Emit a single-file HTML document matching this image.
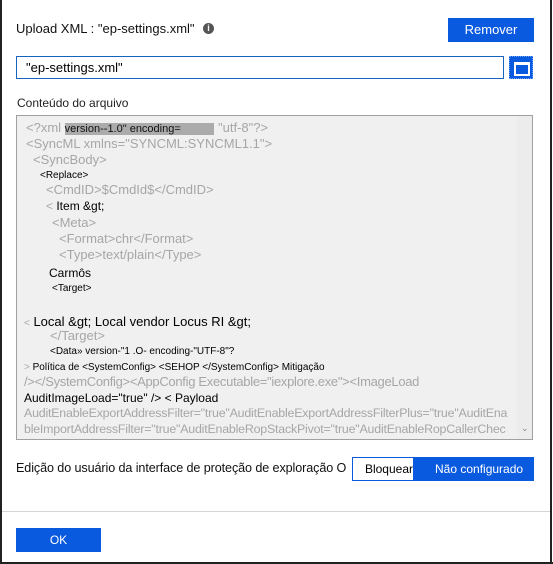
<!DOCTYPE html>
<html><head><style>
body{margin:0;width:553px;height:564px;background:#fff;font-family:"Liberation Sans",sans-serif;position:relative;overflow:hidden}
.a{position:absolute;white-space:nowrap}
.g{color:#a6a6a6;font-size:13px}
.k{color:#000;font-size:10px}
.box{position:absolute;left:16px;top:115px;width:517px;height:325px;background:#f0f0f0;border:1px solid #a0a0a0;box-sizing:border-box;overflow:hidden}
.box .a{margin-left:-17px;margin-top:-116px}
</style></head><body>
<div class="a" style="left:0;top:0;width:2px;height:564px;background:#222"></div>
<div class="a" style="left:550px;top:0;width:2px;height:564px;background:#222"></div>
<div class="a" style="left:0;top:562px;width:553px;height:2px;background:#222"></div>

<div class="a" style="left:16px;top:21px;font-size:13px;color:#111">Upload XML : "ep-settings.xml"</div>
<div class="a" style="left:203px;top:23px;width:11px;height:11px;border-radius:50%;background:#555;color:#fff;font-size:9px;font-weight:bold;text-align:center;line-height:11px">i</div>
<div class="a" style="left:448px;top:18px;width:86px;height:24px;background:#0a5ae0;color:#fff;font-size:13px;text-align:center;line-height:24px">Remover</div>

<div class="a" style="left:16px;top:56px;width:488px;height:23px;border:1px solid #1565c0;font-size:13px;line-height:21px;padding-left:9px;box-sizing:border-box">"ep-settings.xml"</div>
<div class="a" style="left:509px;top:56px;width:24px;height:23px;background:#0a5ae0;border:1px dotted #6aa0ff;box-sizing:border-box"><div style="position:absolute;left:4px;top:5px;width:12px;height:9px;border:2px solid #fff;border-top-width:3px"></div></div>

<div class="a" style="left:17px;top:96px;font-size:12px;color:#222">Conteúdo do arquivo</div>
<div class="box">
<div class="a" style="left:517px;top:116px;width:15px;height:323px;background:#ececec"></div>
<div class="a" style="left:521px;top:423px;font-size:9px;color:#888">⌄</div>
<div class="a g" style="left:26px;top:120px">&lt;?xml <span style="background:#ababab;color:#111;font-size:11px">version--1.0" encoding=&nbsp;&nbsp;&nbsp;&nbsp;&nbsp;&nbsp;&nbsp;&nbsp;&nbsp;&nbsp;&nbsp;</span> "utf-8"?&gt;</div>
<div class="a g" style="left:26px;top:136px">&lt;SyncML xmlns="SYNCML:SYNCML1.1"&gt;</div>
<div class="a g" style="left:33px;top:152px">&lt;SyncBody&gt;</div>
<div class="a k" style="left:40px;top:170px">&lt;Replace&gt;</div>
<div class="a g" style="left:46px;top:182px">&lt;CmdID&gt;$CmdId$&lt;/CmdID&gt;</div>
<div class="a" style="left:46px;top:199px;font-size:12px"><span style="color:#aaa">&lt;</span> Item &amp;gt;</div>
<div class="a g" style="left:52px;top:215px">&lt;Meta&gt;</div>
<div class="a g" style="left:59px;top:231px">&lt;Format&gt;chr&lt;/Format&gt;</div>
<div class="a g" style="left:59px;top:247px">&lt;Type&gt;text/plain&lt;/Type&gt;</div>
<div class="a" style="left:49px;top:266px;font-size:12px">Carmôs</div>
<div class="a k" style="left:52px;top:283px;font-size:10px">&lt;Target&gt;</div>
<div class="a" style="left:24px;top:314px;font-size:13px"><span style="color:#aaa;font-size:10px">&lt;</span> Local &amp;gt; Local vendor Locus RI &amp;gt;</div>
<div class="a g" style="left:50px;top:328px">&lt;/Target&gt;</div>
<div class="a k" style="left:50px;top:346px">&lt;Data» version-"1 .O- encoding-"UTF-8"?</div>
<div class="a k" style="left:24px;top:362px"><span style="color:#aaa">&gt;</span> Política de &lt;SystemConfig&gt; &lt;SEHOP &lt;/SystemConfig&gt; Mitigação</div>
<div class="a g" style="left:24px;top:374px;letter-spacing:-0.3px">/&gt;&lt;/SystemConfig&gt;&lt;AppConfig Executable="iexplore.exe"&gt;&lt;ImageLoad</div>
<div class="a" style="left:24px;top:391px;font-size:12px">AuditImageLoad="true" /&gt; &lt; Payload</div>
<div class="a g" style="left:24px;top:406px;font-size:12.4px;letter-spacing:-0.2px">AuditEnableExportAddressFilter="true"AuditEnableExportAddressFilterPlus="true"AuditEna</div>
<div class="a g" style="left:24px;top:422px;font-size:12.4px;letter-spacing:-0.2px">bleImportAddressFilter="true"AuditEnableRopStackPivot="true"AuditEnableRopCallerChec</div>
</div>

<div class="a" style="left:16px;top:461px;font-size:12.6px;letter-spacing:-0.1px;color:#111">Edição do usuário da interface de proteção de exploração O</div>
<div class="a" style="left:352px;top:457px;width:182px;height:24px;border:1px solid #0a5ae0;box-sizing:border-box;background:#0a5ae0"></div>
<div class="a" style="left:353px;top:458px;width:60px;height:22px;background:#fff;font-size:12px;text-align:right;line-height:22px">Bloquear</div>
<div class="a" style="left:435px;top:458px;font-size:12px;color:#fff;line-height:22px">Não configurado</div>

<div class="a" style="left:2px;top:511px;width:548px;height:1px;background:#d4d4d4"></div>
<div class="a" style="left:16px;top:528px;width:85px;height:24px;background:#0a5ae0;color:#fff;font-size:12px;text-align:center;line-height:24px">OK</div>
</body></html>
